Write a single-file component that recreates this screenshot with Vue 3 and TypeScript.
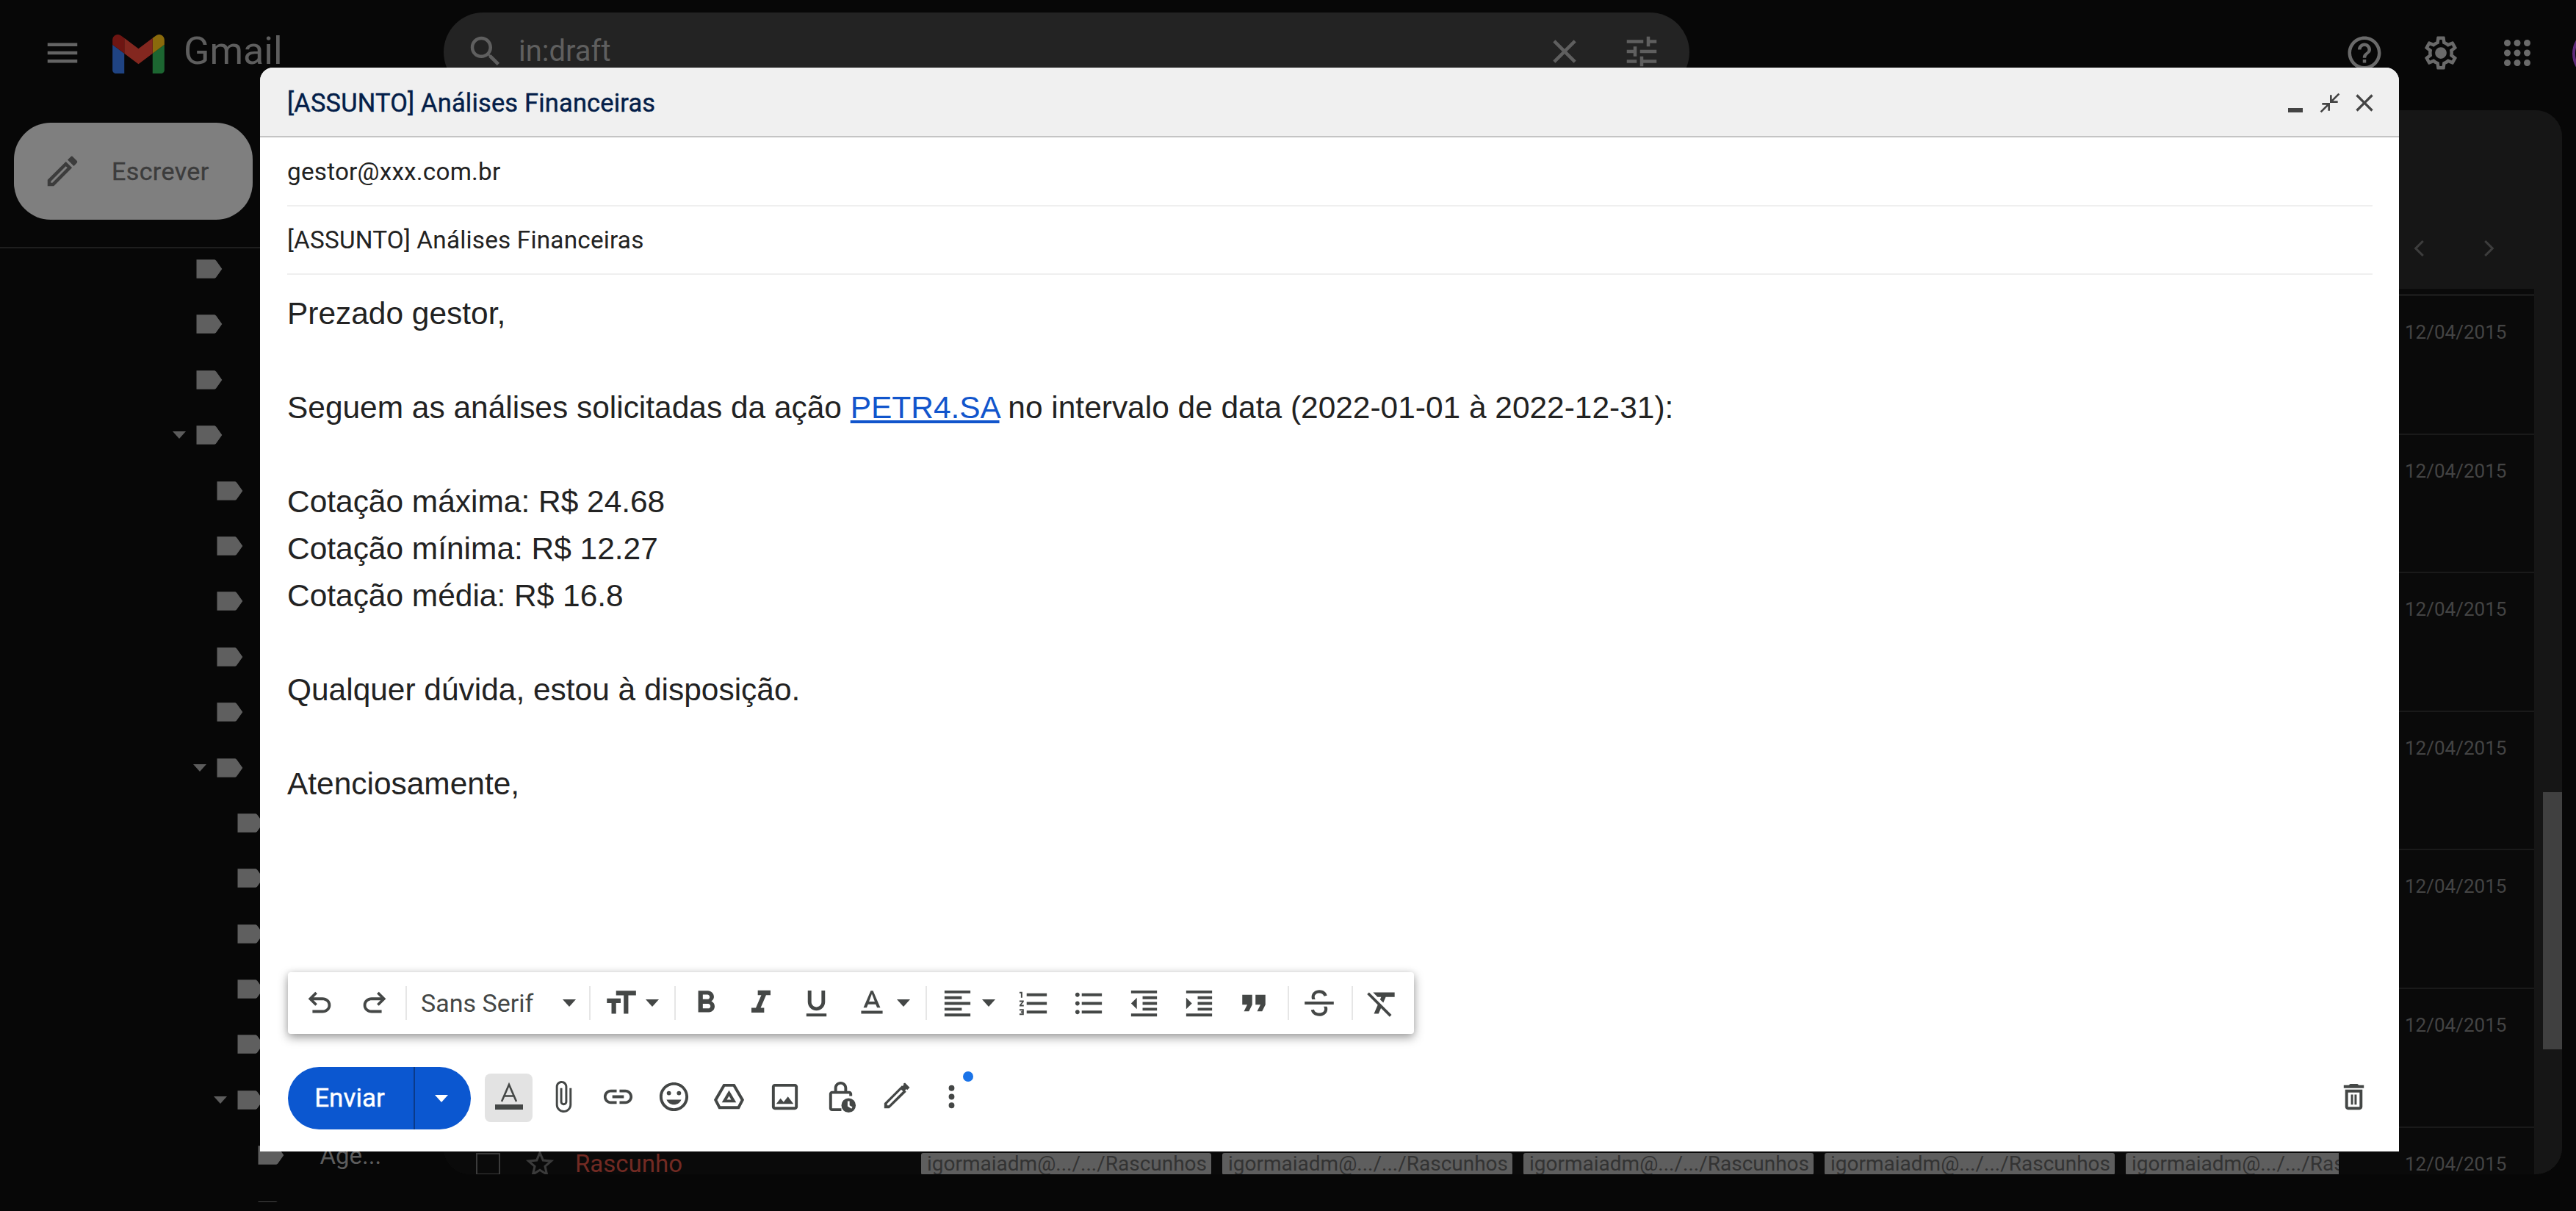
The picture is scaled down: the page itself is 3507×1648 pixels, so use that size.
<script setup lang="ts">
const P: Record<string, string> = {
  menu: 'M3 18h18v-2H3v2zm0-5h18v-2H3v2zm0-7v2h18V6H3z',
  search: 'M15.5 14h-.79l-.28-.27C15.41 12.59 16 11.11 16 9.5 16 5.91 13.09 3 9.5 3S3 5.91 3 9.5 5.91 16 9.5 16c1.61 0 3.09-.59 4.23-1.57l.27.28v.79l5 4.99L20.49 19l-4.99-5zm-6 0C7.01 14 5 11.99 5 9.5S7.01 5 9.5 5 14 7.01 14 9.5 11.99 14 9.5 14z',
  close: 'M19 6.41L17.59 5 12 10.59 6.41 5 5 6.41 10.59 12 5 17.59 6.41 19 12 13.41 17.59 19 19 17.59 13.41 12z',
  tune: 'M3 17v2h6v-2H3zM3 5v2h10V5H3zm10 16v-2h8v-2h-8v-2h-2v6h2zM7 9v2H3v2h4v2h2V9H7zm14 4v-2H11v2h10zm-6-4h2V7h4V5h-4V3h-2v6z',
  help: 'M11 18h2v-2h-2v2zm1-16C6.48 2 2 6.48 2 12s4.48 10 10 10 10-4.48 10-10S17.52 2 12 2zm0 18c-4.41 0-8-3.59-8-8s3.59-8 8-8 8 3.59 8 8-3.59 8-8 8zm0-14c-2.21 0-4 1.79-4 4h2c0-1.1.9-2 2-2s2 .9 2 2c0 2-3 1.75-3 5h2c0-2.25 3-2.5 3-5 0-2.21-1.79-4-4-4z',
  gear: 'M19.43 12.98c.04-.32.07-.64.07-.98 0-.34-.03-.66-.07-.98l2.11-1.65c.19-.15.24-.42.12-.64l-2-3.46c-.09-.16-.26-.25-.44-.25-.06 0-.12.01-.17.03l-2.49 1c-.52-.4-1.08-.73-1.69-.98l-.38-2.65C14.46 2.18 14.25 2 14 2h-4c-.25 0-.46.18-.49.42l-.38 2.65c-.61.25-1.17.59-1.69.98l-2.49-1c-.06-.02-.12-.03-.18-.03-.17 0-.34.09-.43.25l-2 3.46c-.13.22-.07.49.12.64l2.11 1.65c-.04.32-.07.65-.07.98 0 .33.03.66.07.98l-2.11 1.65c-.19.15-.24.42-.12.64l2 3.46c.09.16.26.25.44.25.06 0 .12-.01.17-.03l2.49-1c.52.4 1.08.73 1.69.98l.38 2.65c.03.24.24.42.49.42h4c.25 0 .46-.18.49-.42l.38-2.65c.61-.25 1.17-.59 1.69-.98l2.49 1c.06.02.12.03.18.03.17 0 .34-.09.43-.25l2-3.46c.12-.22.07-.49-.12-.64l-2.11-1.65zm-1.98-1.71c.04.31.05.52.05.73 0 .21-.02.43-.05.73l-.14 1.13.89.7 1.08.84-.7 1.21-1.27-.51-1.04-.42-.9.68c-.43.32-.84.56-1.25.73l-1.06.43-.16 1.13-.2 1.35h-1.4l-.19-1.35-.16-1.13-1.06-.43c-.43-.18-.83-.41-1.23-.71l-.91-.7-1.06.43-1.27.51-.7-1.21 1.08-.84.89-.7-.14-1.13c-.03-.31-.05-.54-.05-.74s.02-.43.05-.73l.14-1.13-.89-.7-1.08-.84.7-1.21 1.27.51 1.04.42.9-.68c.43-.32.84-.56 1.25-.73l1.06-.43.16-1.13.2-1.35h1.39l.19 1.35.16 1.13 1.06.43c.43.18.83.41 1.23.71l.91.7 1.06-.43 1.27-.51.7 1.21-1.07.85-.89.7.14 1.13zM12 8.5a3.5 3.5 0 1 0 0 7 3.5 3.5 0 0 0 0-7z',
  apps: 'M6 8a2 2 0 1 0 0-4 2 2 0 0 0 0 4zm6 12a2 2 0 1 0 0-4 2 2 0 0 0 0 4zm-6 0a2 2 0 1 0 0-4 2 2 0 0 0 0 4zm0-6a2 2 0 1 0 0-4 2 2 0 0 0 0 4zm6 0a2 2 0 1 0 0-4 2 2 0 0 0 0 4zm6-10a2 2 0 1 0 0 4 2 2 0 0 0 0-4zm-6 4a2 2 0 1 0 0-4 2 2 0 0 0 0 4zm6 6a2 2 0 1 0 0-4 2 2 0 0 0 0 4zm0 6a2 2 0 1 0 0-4 2 2 0 0 0 0 4z',
  edit: 'M3 17.25V21h3.75L17.81 9.94l-3.75-3.75L3 17.25zM5.92 19H5v-.92l9.06-9.06.92.92L5.92 19zM20.71 5.63l-2.34-2.34a1 1 0 0 0-1.41 0l-1.83 1.83 3.75 3.75 1.83-1.83a1 1 0 0 0 0-1.41z',
  label: 'M17.63 5.84C17.27 5.33 16.67 5 16 5L3 5v14l13 0c.67 0 1.27-.33 1.63-.84L22 12l-4.37-6.16z',
  star: 'M22 9.24l-7.19-.62L12 2 9.19 8.63 2 9.24l5.46 4.73L5.82 21 12 17.27 18.18 21l-1.63-7.03L22 9.24zM12 15.4l-3.76 2.27 1-4.28-3.32-2.88 4.38-.38L12 6.1l1.71 4.04 4.38.38-3.32 2.88 1 4.28L12 15.4z',
  undo: 'M7 19v-2h7.1c1.05 0 1.96-.33 2.74-1 .77-.67 1.16-1.5 1.16-2.5s-.39-1.83-1.16-2.5c-.78-.67-1.69-1-2.74-1H7.8l2.6 2.6L9 14 4 9l5-5 1.4 1.4L7.8 8h6.3c1.62 0 3 .53 4.16 1.58C19.42 10.63 20 11.94 20 13.5s-.58 2.87-1.74 3.93C17.1 18.47 15.72 19 14.1 19H7z',
  redo: 'M9.9 19c-1.62 0-3-.53-4.16-1.57C4.58 16.37 4 15.06 4 13.5s.58-2.87 1.74-3.92C6.9 8.53 8.28 8 9.9 8h6.3l-2.6-2.6L15 4l5 5-5 5-1.4-1.4 2.6-2.6H9.9c-1.05 0-1.96.33-2.74 1C6.39 11.67 6 12.5 6 13.5s.39 1.83 1.16 2.5c.78.67 1.69 1 2.74 1H17v2H9.9z',
  size: 'M9 4v3h5v12h3V7h5V4H9zm-6 8h3v7h3v-7h3V9H3v3z',
  bold: 'M15.6 10.79c.97-.67 1.65-1.77 1.65-2.79 0-2.26-1.75-4-4-4H7v14h7.04c2.09 0 3.71-1.7 3.71-3.79 0-1.52-.86-2.82-2.15-3.42zM10 6.5h3c.83 0 1.5.67 1.5 1.5s-.67 1.5-1.5 1.5h-3v-3zm3.5 9H10v-3h3.5c.83 0 1.5.67 1.5 1.5s-.67 1.5-1.5 1.5z',
  italic: 'M10 4v3h2.21l-3.42 8H6v3h8v-3h-2.21l3.42-8H18V4z',
  under: 'M12 17c3.31 0 6-2.69 6-6V3h-2.5v8c0 1.93-1.57 3.5-3.5 3.5S8.5 12.93 8.5 11V3H6v8c0 3.31 2.69 6 6 6zm-7 2v2h14v-2H5z',
  color: 'M5 17v2h14v-2H5zm4.5-4.2h5l.9 2.2h2.1L12.75 4h-1.5L6.5 15h2.1l.9-2.2zM12 5.98L13.87 11h-3.74L12 5.98z',
  align: 'M15 15H3v2h12v-2zm0-8H3v2h12V7zM3 13h18v-2H3v2zm0 8h18v-2H3v2zM3 3v2h18V3H3z',
  num: 'M2 17h2v.5H3v1h1v.5H2v1h3v-4H2v1zm1-9h1V4H2v1h1v3zm-1 3h1.8L2 13.1v.9h3v-1H3.2L5 10.9V10H2v1zm5-6v2h14V5H7zm0 14h14v-2H7v2zm0-6h14v-2H7v2z',
  bul: 'M4 10.5c-.83 0-1.5.67-1.5 1.5s.67 1.5 1.5 1.5 1.5-.67 1.5-1.5-.67-1.5-1.5-1.5zm0-6c-.83 0-1.5.67-1.5 1.5S3.17 7.5 4 7.5 5.5 6.83 5.5 6 4.83 4.5 4 4.5zm0 12c-.83 0-1.5.68-1.5 1.5s.68 1.5 1.5 1.5 1.5-.68 1.5-1.5-.67-1.5-1.5-1.5zM7 19h14v-2H7v2zm0-6h14v-2H7v2zm0-8v2h14V5H7z',
  less: 'M11 17h10v-2H11v2zm-8-5l4 4V8l-4 4zm0 9h18v-2H3v2zM3 3v2h18V3H3zm8 6h10V7H11v2zm0 4h10v-2H11v2z',
  more: 'M3 21h18v-2H3v2zM3 8v8l4-4-4-4zm8 9h10v-2H11v2zM3 3v2h18V3H3zm8 6h10V7H11v2zm0 4h10v-2H11v2z',
  quote: 'M6 17h3l2-4V7H5v6h3zm8 0h3l2-4V7h-6v6h3z',
  strike: 'M2.500 11h19v2h-19zM7.300 9.600C7.100 9.100 7 8.600 7 8c0-2.600 2.300-4.500 5.100-4.500 2.500 0 4.500 1.300 5 3.600l-2 .5c-.3-1.300-1.500-2.100-3-2.100-1.800 0-3.100 1-3.100 2.500 0 .6.2 1.100.5 1.600zM17 14.300c.3.500.400 1 .400 1.600 0 2.800-2.400 4.600-5.400 4.600-2.700 0-4.900-1.400-5.400-3.900l2-.4c.3 1.500 1.700 2.300 3.400 2.300 1.900 0 3.400-1 3.400-2.600 0-.6-.2-1.100-.5-1.600z',
  clear: 'M3.270 5L2 6.270l6.970 6.970L6.500 19h3l1.570-3.660L16.730 21 18 19.730 3.550 5.270 3.270 5zM6 5v.18L8.820 8h2.400l-.72 1.680 2.100 2.100L14.210 8H20V5H6z',
  attach: 'M16.500 6v11.500c0 2.210-1.790 4-4 4s-4-1.790-4-4V5c0-1.380 1.120-2.500 2.500-2.500s2.500 1.120 2.500 2.500v10.500c0 .55-.45 1-1 1s-1-.45-1-1V6H10v9.500c0 1.380 1.120 2.500 2.500 2.500s2.500-1.120 2.500-2.500V5c0-2.210-1.790-4-4-4S7 2.790 7 5v12.500c0 3.040 2.460 5.500 5.500 5.500s5.500-2.460 5.500-5.500V6h-1.500z',
  link: 'M3.900 12c0-1.710 1.390-3.100 3.100-3.100h4V7H7c-2.760 0-5 2.240-5 5s2.240 5 5 5h4v-1.900H7c-1.710 0-3.100-1.390-3.100-3.100zM8 13h8v-2H8v2zm9-6h-4v1.900h4c1.710 0 3.100 1.390 3.100 3.100s-1.390 3.100-3.100 3.100h-4V17h4c2.760 0 5-2.240 5-5s-2.240-5-5-5z',
  emoji: 'M11.990 2C6.470 2 2 6.480 2 12s4.470 10 9.990 10C17.520 22 22 17.520 22 12S17.520 2 11.990 2zM12 20c-4.420 0-8-3.580-8-8s3.580-8 8-8 8 3.580 8 8-3.580 8-8 8zM15.500 8a1.500 1.500 0 1 0 0 3 1.500 1.500 0 0 0 0-3zM8.500 8a1.500 1.500 0 1 0 0 3 1.500 1.500 0 0 0 0-3zM12 17.500c2.330 0 4.310-1.460 5.110-3.500H6.890c.8 2.040 2.780 3.500 5.110 3.500z',
  drive: 'M8 3h8l6.500 11.200-3.300 6.300H4.800L1.500 14.200 8 3zm1.200 2L3.800 14.300l2.200 4.200h12l2.200-4.200L14.800 5H9.200zM12 7.500l5 8.500H7l5-8.500zm0 4l-1.500 2.500h3L12 11.500z',
  photo: 'M19 5v14H5V5h14m0-2H5c-1.100 0-2 .9-2 2v14c0 1.100.9 2 2 2h14c1.100 0 2-.9 2-2V5c0-1.100-.9-2-2-2zm-4.860 8.860l-3 3.870L9 13.140 6 17h12l-3.860-5.140z',
  lock: 'M12 1.500c-2.500 0-4.500 2-4.500 4.500v2H6c-1.100 0-2 .9-2 2v10c0 1.100.9 2 2 2h6.500v-2H6V10h12v1.500h2V10c0-1.100-.9-2-2-2h-1.500V6c0-2.500-2-4.500-4.500-4.500zm0 2c1.400 0 2.500 1.100 2.500 2.500v2h-5V6c0-1.400 1.100-2.500 2.500-2.500zM17.500 13a5 5 0 1 0 0 10 5 5 0 0 0 0-10zm-.7 2h1.400v3l2 1.200-.7 1.100-2.700-1.600V15z',
  pen: 'M18.400 2.300l3.300 3.300-1.700 1.700-.6-.6-1 1 .9.9L7.500 20H4v-3.500L16.300 4.200l.4.400 1-1-.6-.6zM15.800 7L6 16.800V18h1.200L17 8.200 15.800 7z',
  dots: 'M12 8a2 2 0 1 0 0-4 2 2 0 0 0 0 4zm0 2a2 2 0 1 0 0 4 2 2 0 0 0 0-4zm0 6a2 2 0 1 0 0 4 2 2 0 0 0 0-4z',
  trash: 'M6 19c0 1.100.9 2 2 2h8c1.100 0 2-.9 2-2V7H6v12zM8 9h8v10H8V9zm7.500-5l-1-1h-5l-1 1H5v2h14V4zM10 10.500h1.500v7H10zM12.500 10.500H14v7h-1.500z',
  collapse: 'M3.400 22L2 20.600 8.600 14H4v-2h8v8h-2v-4.600zM12 12V4h2v4.600L20.600 2 22 3.400 15.400 10H20v2z',
}

const levels: number[] = [0, 0, 0, 0, 1, 1, 1, 1, 1, 1, 2, 2, 2, 2, 2, 2, 3, 3]
const carets = new Set<number>([3, 9, 15])
const labels = levels.map((level, i) => ({
  indent: level * 28,
  caret: carets.has(i),
  text: i === 16 ? 'Age...' : '',
}))

const rows = Array.from({ length: 7 }, (_, i) => i)
const chips = Array.from({ length: 5 }, (_, i) => i)
const bottomIcons = ['attach', 'link', 'emoji', 'drive', 'photo', 'lock', 'pen', 'dots']
</script>

<template>
  <div class="page">
    <header class="topbar">
      <svg class="ti menu" viewBox="0 0 24 24"><path :d="P.menu" /></svg>
      <svg class="logo" viewBox="52 42 88 66">
        <path fill="#1f4382" d="M58 108h14V74L52 59v43c0 3.320 2.690 6 6 6" />
        <path fill="#1c6631" d="M120 108h14c3.320 0 6-2.690 6-6V59l-20 15" />
        <path fill="#8a6a0c" d="M120 48v26l20-15v-8c0-7.420-8.470-11.650-14.400-7.200" />
        <path fill="#83271f" d="M72 74V48l24 18 24-18v26L96 92" />
        <path fill="#6e1512" d="M52 51v8l20 15V48l-5.600-4.200c-5.940-4.450-14.400-.220-14.400 7.200" />
      </svg>
      <span class="brand">Gmail</span>
      <div class="search">
        <svg class="ti" viewBox="0 0 24 24"><path :d="P.search" /></svg>
        <span class="query">in:draft</span>
        <svg class="ti sclose" viewBox="0 0 24 24"><path :d="P.close" /></svg>
        <svg class="ti stune" viewBox="0 0 24 24"><path :d="P.tune" /></svg>
      </div>
      <div class="right">
        <svg class="ti" viewBox="0 0 24 24"><path :d="P.help" /></svg>
        <svg class="ti" viewBox="0 0 24 24"><path :d="P.gear" /></svg>
        <svg class="ti" viewBox="0 0 24 24"><path :d="P.apps" /></svg>
        <div class="avatar"></div>
      </div>
    </header>

    <div class="content">
      <aside class="sidebar">
        <div class="compose">
          <svg class="pencil" viewBox="0 0 24 24"><path :d="P.edit" /></svg>
          <span>Escrever</span>
        </div>
        <div class="divider"></div>
        <ul class="labels">
          <li v-for="(l, i) in labels" :key="i" class="lrow" :style="{ paddingLeft: l.indent + 'px' }">
            <i class="tri" :class="{ off: !l.caret }"></i>
            <svg class="lab" viewBox="0 0 24 24" preserveAspectRatio="none"><path :d="P.label" /></svg>
            <span v-if="l.text" class="ltext">{{ l.text }}</span>
          </li>
        </ul>
      </aside>

      <main class="main">
        <div class="mainbody">
          <div class="pager">
            <svg viewBox="0 0 24 24" class="chev"><path d="M15 4l-8 8 8 8" /></svg>
            <svg viewBox="0 0 24 24" class="chev"><path d="M9 4l8 8-8 8" /></svg>
          </div>
          <div class="band"></div>
          <div class="list">
            <div v-for="r in rows" :key="r" class="row">
              <span class="check"></span>
              <svg class="star" viewBox="0 0 24 24"><path :d="P.star" /></svg>
              <span class="draft">Rascunho</span>
              <div class="chips">
                <span v-for="c in chips" :key="c" class="chip">igormaiadm@.../.../Rascunhos</span>
              </div>
              <span class="date">12/04/2015</span>
            </div>
          </div>
        </div>
        <div class="track"><div class="thumb"></div></div>
      </main>
    </div>

    <section class="dialog">
      <div class="dhead">
        <span class="dtitle">[ASSUNTO] Análises Financeiras</span>
        <div class="wctl">
          <span class="wmin"></span>
          <svg class="wi" viewBox="0 0 24 24"><path :d="P.collapse" /></svg>
          <svg class="wx" viewBox="0 0 24 24"><path :d="P.close" /></svg>
        </div>
      </div>
      <div class="field"><span>gestor@xxx.com.br</span></div>
      <div class="field"><span>[ASSUNTO] Análises Financeiras</span></div>
      <div class="body">
        <div>Prezado gestor,</div>
        <br />
        <div>Seguem as análises solicitadas da ação <a class="tick">PETR4.SA</a> no intervalo de data (2022-01-01 à 2022-12-31):</div>
        <br />
        <div>Cotação máxima: R$ 24.68</div>
        <div>Cotação mínima: R$ 12.27</div>
        <div>Cotação média: R$ 16.8</div>
        <br />
        <div>Qualquer dúvida, estou à disposição.</div>
        <br />
        <div>Atenciosamente,</div>
      </div>

      <div class="fmt">
        <div class="btn"><svg class="ic s46" viewBox="0 0 24 24"><path :d="P.undo" /></svg></div>
        <div class="btn"><svg class="ic s46" viewBox="0 0 24 24"><path :d="P.redo" /></svg></div>
        <i class="sep s1"></i>
        <div class="select"><span>Sans Serif</span><i class="caret"></i></div>
        <i class="sep"></i>
        <div class="btn nar ml10"><svg class="ic s50" viewBox="0 0 24 24"><path :d="P.size" /></svg></div>
        <div class="cbox mr18"><i class="caret"></i></div>
        <i class="sep"></i>
        <div class="btn ml35"><svg class="ic s50" viewBox="0 0 24 24"><path :d="P.bold" /></svg></div>
        <div class="btn"><svg class="ic s52" viewBox="0 0 24 24"><path :d="P.italic" /></svg></div>
        <div class="btn"><svg class="ic" viewBox="0 0 24 24"><path :d="P.under" /></svg></div>
        <div class="btn nar ml75"><svg class="ic s50" viewBox="0 0 24 24"><path :d="P.color" /></svg></div>
        <div class="cbox mr18"><i class="caret"></i></div>
        <i class="sep"></i>
        <div class="btn nar ml10"><svg class="ic" viewBox="0 0 24 24"><path :d="P.align" /></svg></div>
        <div class="cbox mr11"><i class="caret"></i></div>
        <div class="btn"><svg class="ic" viewBox="0 0 24 24"><path :d="P.num" /></svg></div>
        <div class="btn"><svg class="ic" viewBox="0 0 24 24"><path :d="P.bul" /></svg></div>
        <div class="btn"><svg class="ic" viewBox="0 0 24 24"><path :d="P.less" /></svg></div>
        <div class="btn"><svg class="ic" viewBox="0 0 24 24"><path :d="P.more" /></svg></div>
        <div class="btn mr85"><svg class="ic s54" viewBox="0 0 24 24"><path :d="P.quote" /></svg></div>
        <i class="sep"></i>
        <div class="btn ml35 mr65"><svg class="ic s50" viewBox="0 0 24 24"><path :d="P.strike" /></svg></div>
        <i class="sep"></i>
        <div class="btn ml25"><svg class="ic s50" viewBox="0 0 24 24"><path :d="P.clear" /></svg></div>
      </div>

      <div class="actions">
        <div class="send">
          <span class="sendl">Enviar</span>
          <span class="sendr"><i class="caret white"></i></span>
        </div>
        <div class="fa">
          <svg class="facolor" viewBox="0 0 48 48">
            <path class="fastroke" d="M14 29L24 6l10 23M17.500 21.500h13" />
            <path d="M5 33h38v7H5z" />
          </svg>
        </div>
        <div v-for="n in bottomIcons" :key="n" class="aic">
          <svg class="ic" viewBox="0 0 24 24"><path :d="P[n]" /></svg>
          <i v-if="n === 'dots'" class="notify"></i>
        </div>
        <div class="trash"><svg class="ic" viewBox="0 0 24 24"><path :d="P.trash" /></svg></div>
      </div>
    </section>
  </div>
</template>

<style>
html, body { margin: 0; padding: 0; background: #0a0a0a; }
</style>

<style scoped>
.page {
  position: relative;
  width: 3507px;
  height: 1648px;
  overflow: hidden;
  background: #070707;
  font-family: Roboto, "Liberation Sans", sans-serif;
  display: flex;
  flex-direction: column;
}
svg { display: block; flex: none; }
.topbar { height: 150px; flex: none; display: flex; align-items: flex-start; padding-left: 58px; box-sizing: border-box; }
.ti { width: 54px; height: 54px; fill: #646464; }
.menu { margin-top: 45px; }
.logo { width: 71px; height: 53px; margin: 47px 0 0 41px; }
.brand { margin: 35px 0 0 26px; font-size: 52px; line-height: 70px; color: #5e5e5e; width: 354px; flex: none; }
.search {
  width: 1696px; height: 108px; margin-top: 17px; border-radius: 54px; background: #232323; flex: none;
  display: flex; align-items: center; box-sizing: border-box; padding: 0 38px 0 30px;
}
.search .ti { fill: #5f5f5f; margin-top: -3px; }
.query { margin-left: 18px; font-size: 40px; color: #5f5f5f; flex: 1; margin-top: -4px; }
.sclose { margin-right: 51px; }
.right { margin-left: 892px; margin-top: 45px; display: flex; gap: 50px; flex: none; }
.right .ti { fill: #6a6a6a; }
.avatar { width: 72px; height: 72px; border-radius: 50%; border: 4px solid #5d2a78; box-sizing: border-box; margin-left: -2px; margin-top: -8px; }

.content { flex: 1; display: flex; align-items: flex-start; min-height: 0; }
.sidebar { width: 604px; flex: none; height: 1486px; overflow: hidden; }
.compose {
  margin: 17px 0 0 19px; width: 325px; height: 132px; border-radius: 50px; background: #7f7f7f;
  display: flex; align-items: center; box-sizing: border-box; padding-left: 39px; gap: 40px;
  font-size: 34px; color: #3c3c3c; letter-spacing: .4px; -webkit-text-stroke: .35px #3c3c3c;
}
.pencil { width: 54px; height: 54px; fill: #3c3c3c; }
.divider { height: 2px; margin-top: 37px; background: #1e1e1e; }
.labels { list-style: none; margin: -9.700px 0 0; padding: 0 0 0 234.500px; }
.lrow { height: 75.400px; display: flex; align-items: center; box-sizing: border-box; }
.tri { width: 0; height: 0; border-left: 9.500px solid transparent; border-right: 9.500px solid transparent; border-top: 10px solid #5c5c5c; margin-right: 9px; flex: none; }
.tri.off { visibility: hidden; }
.lab { width: 44px; height: 44px; fill: #5f5f5f; }
.ltext { margin-left: 46px; font-size: 33px; color: #5d5d5d; }

.main {
  width: 2884px; height: 1448px; flex: none; display: flex; overflow: hidden; border-radius: 36px;
  background: #161616;
}
.mainbody { width: 2846px; flex: none; display: flex; flex-direction: column; }
.pager { height: 243px; flex: none; display: flex; justify-content: flex-end; align-items: flex-start; box-sizing: border-box; padding: 168px 48px 0 0; gap: 62px; }
.chev { width: 30px; height: 40px; fill: none; stroke: #3d3d3d; stroke-width: 2.500; }
.band { height: 7px; background: #0a0a0a; border-bottom: 3px solid #1a1a1a; flex: none; }
.list { flex: 1; background: #0a0a0a; overflow: hidden; }
.row {
  height: 188.600px; box-sizing: border-box; border-bottom: 2px solid #1a1a1a;
  display: flex; align-items: flex-start; padding-top: 34px;
}
.check { width: 33px; height: 30px; box-sizing: border-box; border: 2px solid #3b3b3b; margin-left: 44px; flex: none; }
.star { width: 46px; height: 46px; fill: #3b3b3b; margin: -8px 0 0 31px; }
.draft { margin-left: 25px; width: 471px; flex: none; font-size: 33px; line-height: 30px; color: #722a23; }
.chips { width: 1930px; flex: none; display: flex; gap: 15px; overflow: hidden; }
.chip {
  width: 395px; height: 30px; flex: none; box-sizing: border-box; background: #5e5e5e; color: #333;
  font-size: 28px; line-height: 30px; padding-left: 8px; white-space: nowrap; overflow: hidden; border-radius: 3px;
}
.date { margin-left: 90px; font-size: 26px; line-height: 30px; color: #444; white-space: nowrap; }
.track { flex: 1; background: #161616; display: flex; justify-content: flex-end; }
.thumb { width: 26px; height: 350px; margin-top: 928px; background: #404040; }

.dialog {
  position: absolute; left: 354px; top: 92px; width: 2912px; height: 1475px;
  background: #fff; border-radius: 18px 18px 0 0; display: flex; flex-direction: column; overflow: hidden;
}
.dhead {
  height: 95px; flex: none; box-sizing: border-box; background: #f0f0f0; border-bottom: 2px solid #c4c4c4;
  display: flex; align-items: center; justify-content: space-between; padding: 2px 27px 0 37px;
}
.dtitle { font-size: 34.400px; color: #041e49; letter-spacing: .2px; -webkit-text-stroke: .45px #041e49; }
.wctl { display: flex; align-items: center; }
.wmin { width: 20px; height: 6px; background: #444; margin: 20px 21px 0 0; }
.wi { width: 32px; height: 32px; fill: #444; }
.wx { width: 40px; height: 40px; fill: #444; margin-left: 11px; }
.field {
  margin: 0 36px 0 37px; height: 93.500px; flex: none; box-sizing: border-box; border-bottom: 2px solid #efefef;
  display: flex; align-items: center; font-size: 33.300px; padding-top: 1px; color: #222; letter-spacing: .2px;
}
.body {
  flex: 1; padding: 21px 37px 0; font-family: "Liberation Sans", Arial, sans-serif; font-size: 42.450px; line-height: 64px; color: #222; min-height: 0;
}
.tick { color: #1155cc; text-decoration: underline; }

.fmt {
  margin-left: 38px; width: 1533px; height: 84px; flex: none; box-sizing: border-box; background: #fff; border-radius: 4px;
  box-shadow: 0 5px 14px rgba(0,0,0,.38), 0 0 8px rgba(0,0,0,.08);
  display: flex; align-items: center; padding-left: 5px;
}
.btn { width: 75px; height: 54px; flex: none; display: flex; align-items: center; justify-content: center; }
.btn.nar { width: 62px; }
.ic { width: 47px; height: 47px; fill: #444746; flex: none; }
.s46 { width: 46px; height: 46px; }
.s50 { width: 50px; height: 50px; }
.s52 { width: 52px; height: 52px; }
.s54 { width: 54px; height: 54px; }
.sep { width: 2px; height: 46px; background: #e6e6e6; flex: none; }
.s1 { margin-left: 5px; }
.select { width: 248px; flex: none; box-sizing: border-box; display: flex; align-items: center; justify-content: space-between; padding: 0 18px 0 19px; font-size: 34px; color: #444746; }
.caret { display: block; width: 0; height: 0; border-left: 9.500px solid transparent; border-right: 9.500px solid transparent; border-top: 10px solid #444746; }
.caret.white { border-top-color: #fff; }
.cbox { width: 24px; display: flex; justify-content: center; flex: none; }
.ml10 { margin-left: 10px; }
.ml35 { margin-left: 3.500px; }
.ml25 { margin-left: 2.500px; }
.ml75 { margin-left: 7.500px; }
.mr18 { margin-right: 18px; }
.mr11 { margin-right: 11.500px; }
.mr85 { margin-right: 8.500px; }
.mr65 { margin-right: 6.500px; }

.actions { height: 85px; margin: 45px 38px 30px 38px; display: flex; align-items: center; flex: none; }
.send { width: 249px; height: 85px; flex: none; display: flex; border-radius: 43px; overflow: hidden; background: #0b57d0; color: #fff; font-size: 35px; -webkit-text-stroke: .4px #fff; }
.sendl { width: 173px; box-sizing: border-box; border-right: 2px solid #0a3a8a; display: flex; align-items: center; justify-content: center; padding-right: 3px; }
.sendr { flex: 1; display: flex; align-items: center; justify-content: center; padding-right: 4px; }
.fa { width: 65px; height: 66px; margin: -2px 3px 0 19.400px; flex: none; background: #e3e3e3; border-radius: 8px; display: flex; align-items: center; justify-content: center; }
.facolor { width: 48px; height: 48px; fill: #444746; }
.fastroke { fill: none; stroke: #444746; stroke-width: 2.600px; }
.aic { width: 75.600px; height: 47px; flex: none; display: flex; justify-content: center; position: relative; margin-top: -4px; }
.notify { position: absolute; left: 53px; top: -11px; width: 14px; height: 14px; border-radius: 50%; background: #1a73e8; }
.trash { margin-left: auto; height: 47px; margin-top: -4px; }
</style>
